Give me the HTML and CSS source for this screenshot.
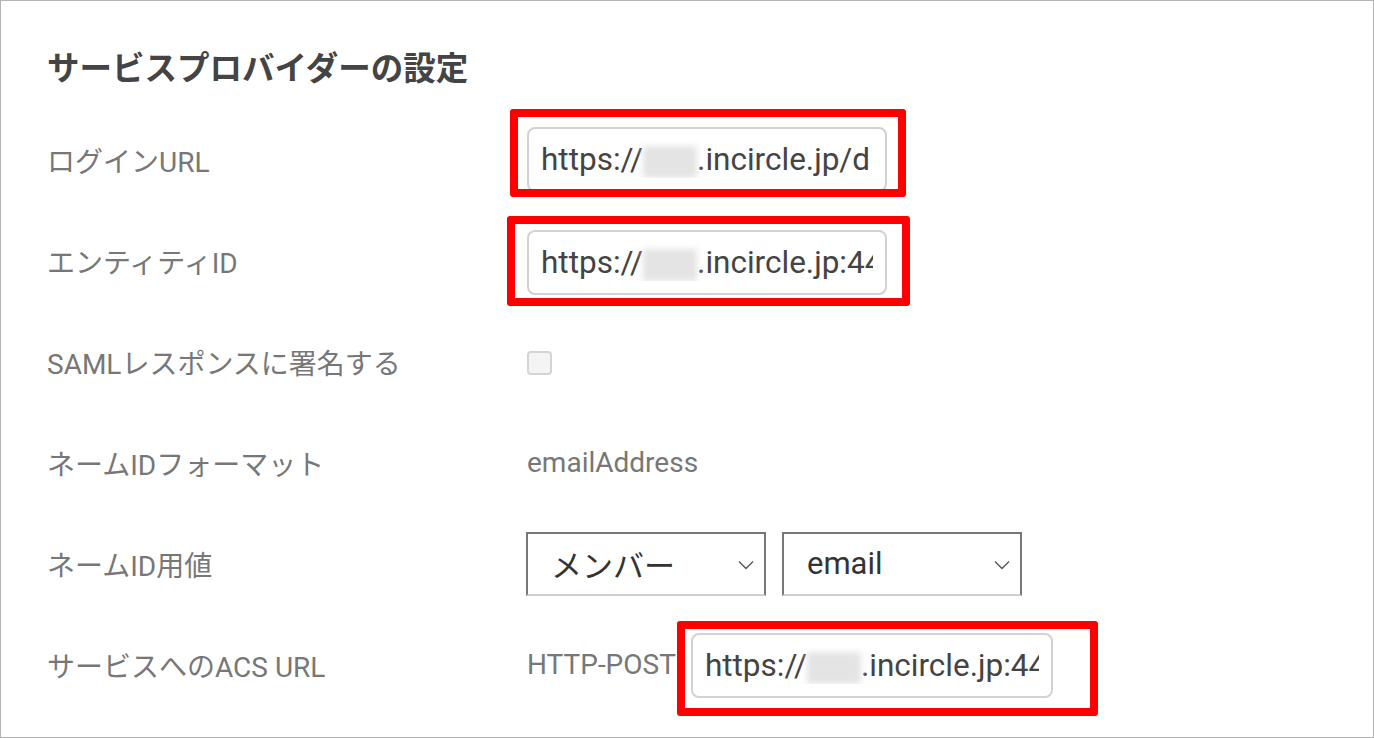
FILE: index.html
```html
<!DOCTYPE html>
<html lang="ja">
<head>
    <meta charset="UTF-8">
    <meta name="viewport" content="width=device-width, initial-scale=1.0">
    <title>サービスプロバイダーの設定</title>
    <link rel="stylesheet" href="styles.css">
</head>
<body>

    <div class="frame">
        <h2 class="title">サービスプロバイダーの設定</h2>

        <div class="rows">
            <!-- ログインURL -->
            <div class="row">
                <div class="label">ログインURL</div>
                <div class="value">
                    <div class="field">
                        <div class="url">https://<span class="blur"></span>.incircle.jp/d</div>
                        <span class="mark mark-login"></span>
                    </div>
                </div>
            </div>

            <!-- エンティティID -->
            <div class="row">
                <div class="label">エンティティID</div>
                <div class="value">
                    <div class="field field-entity">
                        <div class="url">https://<span class="blur"></span>.incircle.jp:443</div>
                        <span class="mark mark-entity"></span>
                    </div>
                </div>
            </div>

            <div class="row">
                <div class="label">SAMLレスポンスに署名する</div>
                <div class="value">
                    <span class="checkbox"></span>
                </div>
            </div>

            <div class="row">
                <div class="label">ネームIDフォーマット</div>
                <div class="value text">emailAddress</div>
            </div>

            <div class="row">
                <div class="label">ネームID用値</div>
                <div class="value selects">
                    <div class="select">
                        <span>メンバー</span>
                        <svg class="chevron" width="16" height="10" viewBox="0 0 16 10"><polyline points="1,1.5 8,8.5 15,1.5" fill="none" stroke="#555" stroke-width="1.4"/></svg>
                    </div>
                    <div class="select">
                        <span>email</span>
                        <svg class="chevron" width="16" height="10" viewBox="0 0 16 10"><polyline points="1,1.5 8,8.5 15,1.5" fill="none" stroke="#555" stroke-width="1.4"/></svg>
                    </div>
                </div>
            </div>

            <!-- ACS URL -->
            <div class="row">
                <div class="label">サービスへのACS URL</div>
                <div class="value">
                    <span class="text binding">HTTP-POST</span>
                    <div class="field field-acs">
                        <div class="url">https://<span class="blur"></span>.incircle.jp:443</div>
                        <span class="mark mark-acs"></span>
                    </div>
                </div>
            </div>
        </div>
    </div>

</body>
</html>
```

FILE: styles.css
```css
body {
    margin: 0;
    padding: 0;
    background-color: white;
    font-family: Roboto, "Noto Sans CJK JP", sans-serif;
}
.frame {
    height: 738px;
    box-sizing: border-box;
    border: 1px solid #b4b4b4;
    padding: 0 0 0 46px;
    overflow: hidden;
}
.title {
    margin: 0 0 20px 0;
    padding-top: 48px;
    font-size: 32.5px;
    line-height: 40px;
    font-weight: 700;
    color: #444;
}
.rows {
    margin-top: 1px;
}
.row {
    display: grid;
    grid-template-columns: 480px 1fr;
    align-items: center;
    height: 101px;
}
.label {
    font-size: 28px;
    color: #777;
}
.value {
    display: flex;
    align-items: center;
}
.text {
    font-size: 28px;
    color: #777;
}
.binding {
    margin-right: 15px;
}
.field {
    position: relative;
    width: 360px;
    height: 65px;
    box-sizing: border-box;
    border: 2px solid #d2d2d2;
    border-radius: 8px;
    padding: 0 12px;
    display: flex;
    align-items: center;
}
.field-entity {
    top: 2px;
}
.field-acs {
    width: 362px;
    top: 1px;
}
.url {
    overflow: hidden;
    white-space: nowrap;
    font-size: 31.5px;
    color: #444;
}
.blur {
    display: inline-block;
    width: 54px;
    height: 32px;
    vertical-align: middle;
    background-color: #e4e4e4;
    filter: blur(3px);
}
/* cadres rouges d'annotation */
.mark {
    position: absolute;
    border: 8px solid #ff0000;
    border-radius: 3px;
}
.mark-login {
    left: -19px;
    top: -20px;
    right: -21px;
    bottom: -7px;
}
.mark-entity {
    left: -22px;
    top: -16px;
    right: -25px;
    bottom: -13px;
}
.mark-acs {
    left: -16px;
    top: -14px;
    right: -47px;
    bottom: -20px;
}
.checkbox {
    width: 25px;
    height: 24px;
    box-sizing: border-box;
    border: 2px solid #d4d4d4;
    border-radius: 4px;
    background-color: #f4f4f4;
    margin-top: 2px;
}
.selects {
    gap: 16px;
    margin-left: -1px;
}
.select {
    width: 240px;
    height: 64px;
    box-sizing: border-box;
    border: 2px solid #777;
    border-bottom-color: #cfcfcf;
    padding: 0 10px 0 23px;
    display: flex;
    align-items: center;
    justify-content: space-between;
    font-size: 31px;
    color: #333;
}
.chevron {
    margin-top: 2px;
}
```
